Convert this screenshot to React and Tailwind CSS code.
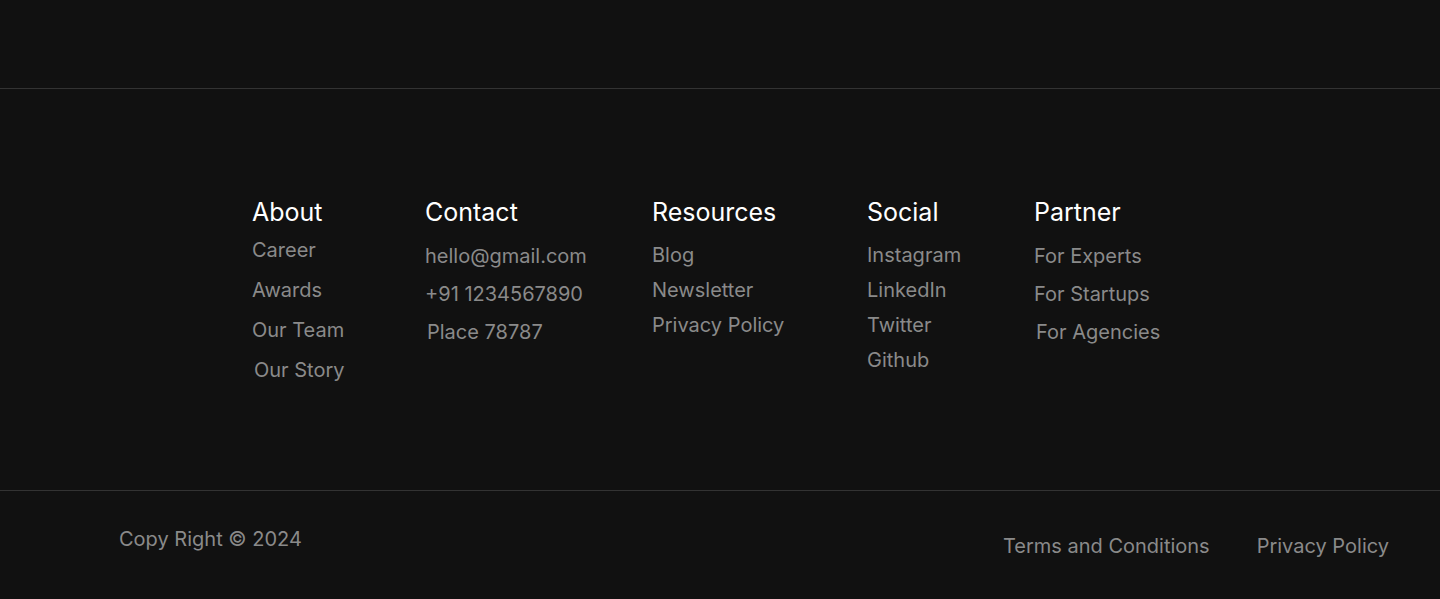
// Footer page: link columns plus a copyright bar
const columns = [
  {
    title: 'About',
    width: 'w-[173px]',
    list: 'mt-2 gap-3',
    links: [
      { label: 'Career' },
      { label: 'Awards' },
      { label: 'Our Team' },
      { label: 'Our Story', nudge: true },
    ],
  },
  {
    title: 'Contact',
    width: 'w-[227px]',
    list: 'mt-[14px] gap-[10px]',
    links: [
      { label: 'hello@gmail.com' },
      { label: '+91 1234567890' },
      { label: 'Place 78787', nudge: true },
    ],
  },
  {
    title: 'Resources',
    width: 'w-[215px]',
    list: 'mt-[13px] gap-[7px]',
    links: [{ label: 'Blog' }, { label: 'Newsletter' }, { label: 'Privacy Policy' }],
  },
  {
    title: 'Social',
    width: 'w-[167px]',
    list: 'mt-[13px] gap-[7px]',
    links: [{ label: 'Instagram' }, { label: 'LinkedIn' }, { label: 'Twitter' }, { label: 'Github' }],
  },
  {
    title: 'Partner',
    width: 'w-[170px]',
    list: 'mt-[14px] gap-[10px]',
    links: [
      { label: 'For Experts' },
      { label: 'For Startups' },
      { label: 'For Agencies', nudge: true },
    ],
  },
]

export default function App() {
  return (
    <div className="min-h-[599px] bg-[#111111] font-['Inter','Liberation_Sans',sans-serif] antialiased">
      {/* empty band above the footer */}
      <div className="h-[89px] border-b border-[#333333]" />

      {/* link columns */}
      <footer className="h-[402px] border-b border-[#333333] pt-[108px] pl-[252px]">
        <div className="flex">
          {columns.map((col) => (
            <div key={col.title} className={col.width}>
              <h4 className="-mt-px text-[25px] leading-8 font-normal text-white">{col.title}</h4>
              <ul className={`flex flex-col ${col.list}`}>
                {col.links.map((link) => (
                  <li key={link.label}>
                    <a
                      href="#"
                      className={`text-xl leading-7 text-[#8a8a8a] hover:text-white ${link.nudge ? 'ml-[2px]' : ''}`}
                    >
                      {link.label}
                    </a>
                  </li>
                ))}
              </ul>
            </div>
          ))}
        </div>
      </footer>

      {/* copyright bar */}
      <div className="flex items-start justify-between pl-[119px] pr-[51px] text-xl leading-7 text-[#8a8a8a]">
        <p className="mt-[34px]">Copy Right © 2024</p>
        <div className="mt-[41px] flex gap-[47px]">
          <a href="#">Terms and Conditions</a>
          <a href="#">Privacy Policy</a>
        </div>
      </div>
    </div>
  )
}
